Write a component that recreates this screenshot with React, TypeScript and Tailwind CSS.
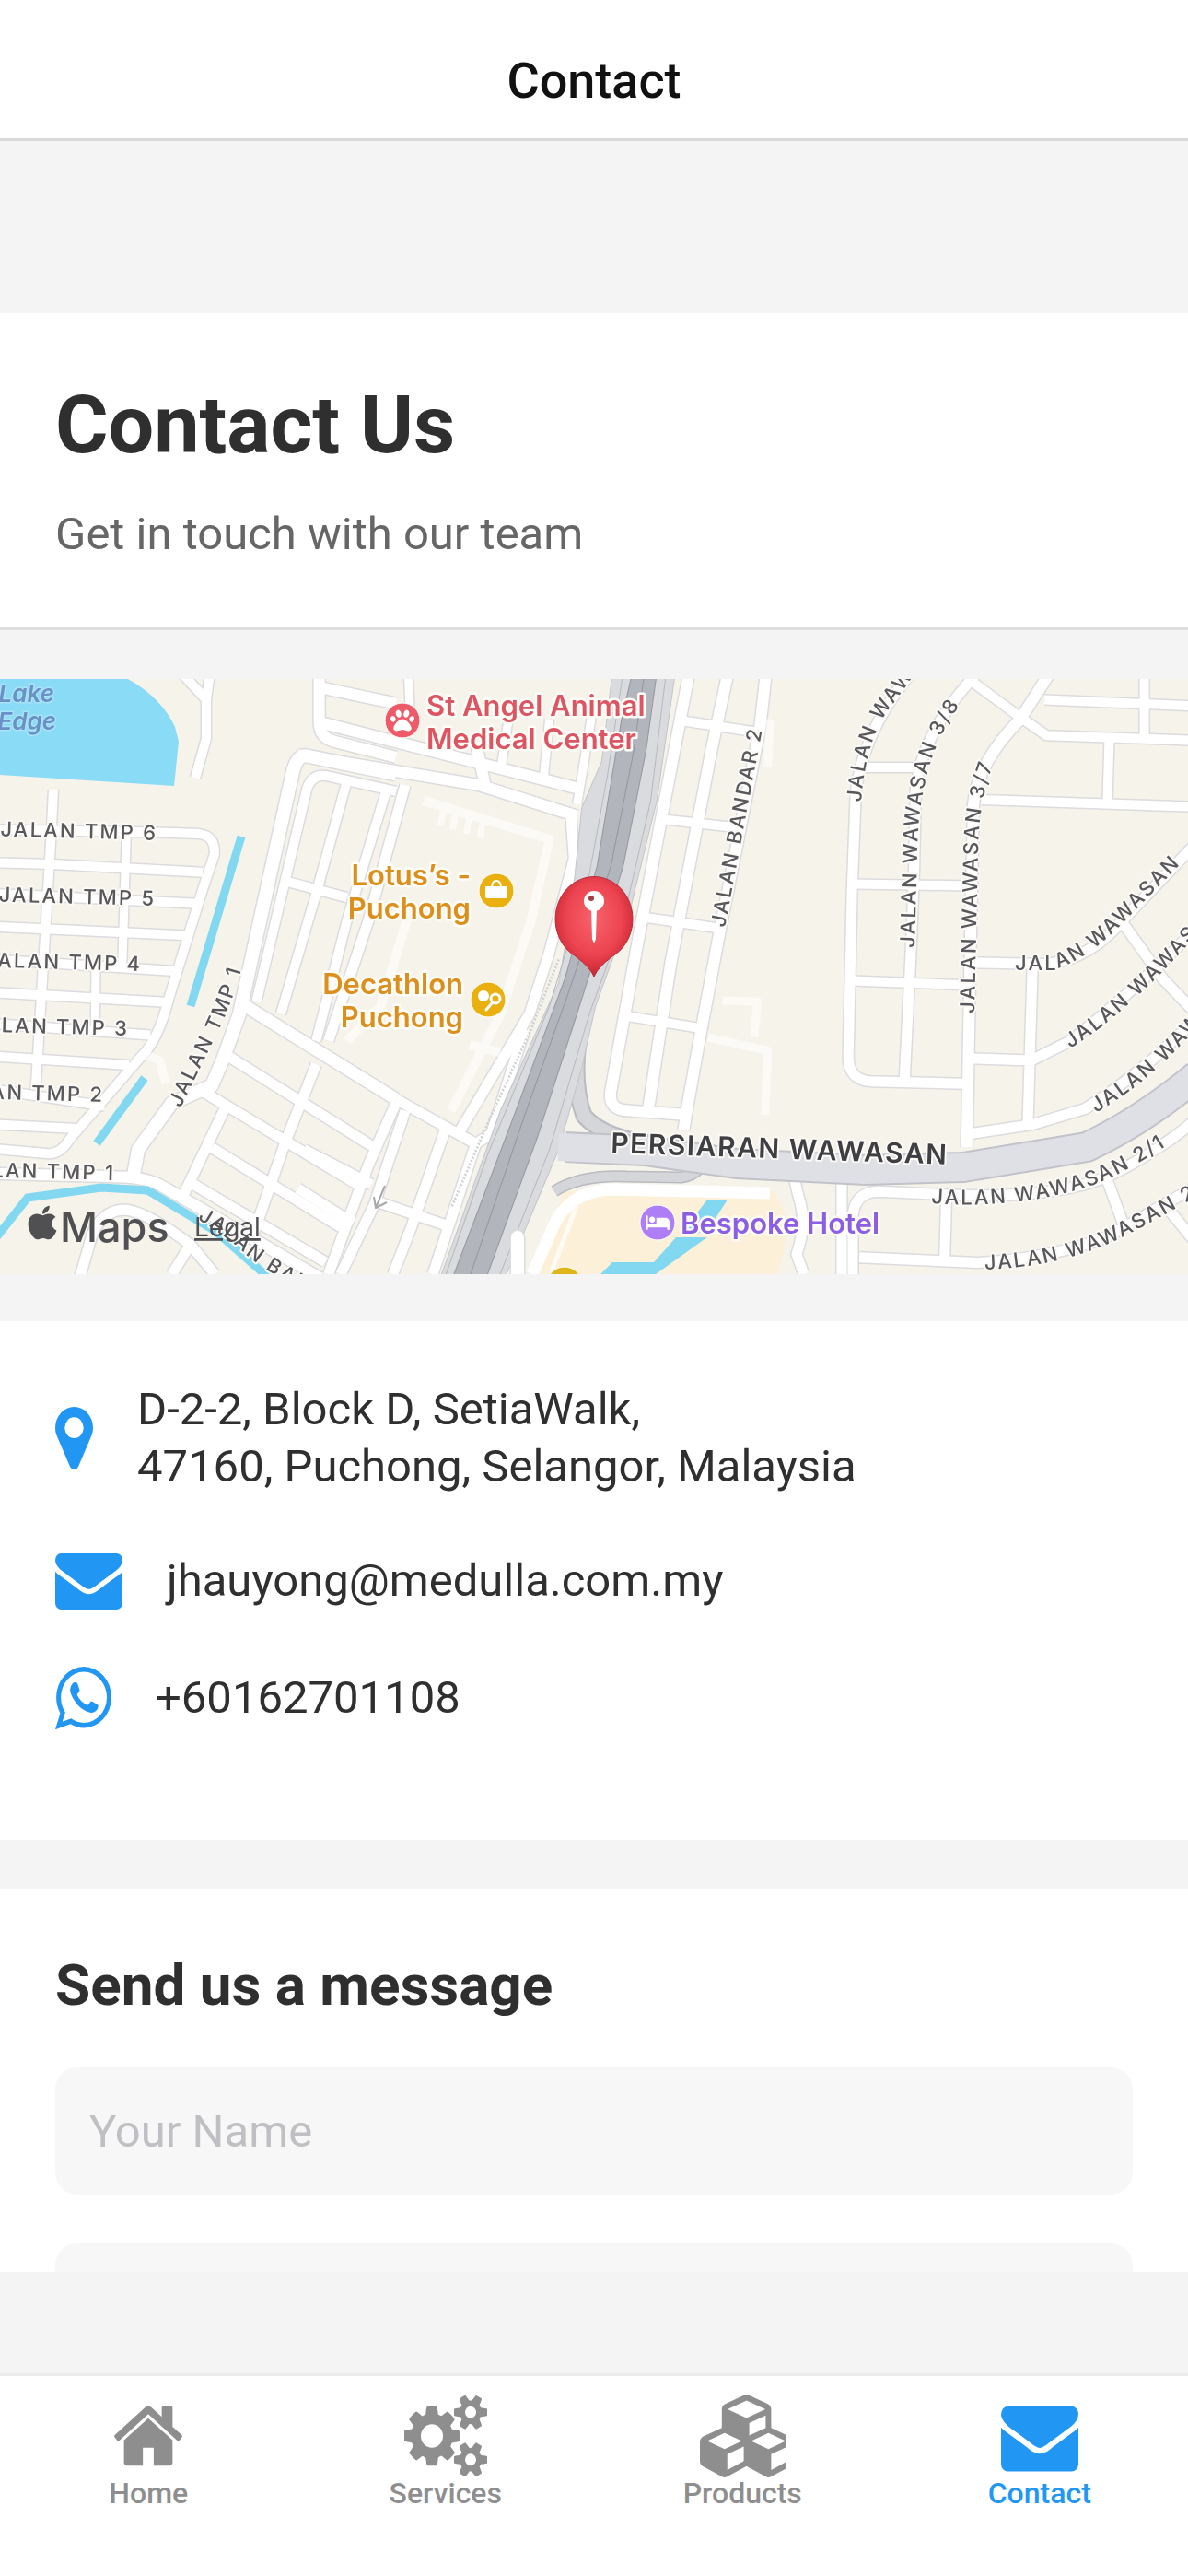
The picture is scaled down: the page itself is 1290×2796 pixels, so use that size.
import type { ReactNode } from "react";
import { FaApple, FaBed, FaPaw } from "react-icons/fa";

/* ---------- icons ---------- */

type IconProps = { className?: string };

function Glyph({ viewBox, d, className }: { viewBox: string; d: string; className?: string }) {
  return (
    <svg viewBox={viewBox} preserveAspectRatio="none" fill="currentColor" aria-hidden="true" className={className}>
      <path d={d} />
    </svg>
  );
}

const ENVELOPE =
  "M1792 710v794q0 66-47 113t-113 47h-1472q-66 0-113-47t-47-113v-794q44 49 101 87 362 246 497 345 57 42 92.5 65.5t94.5 48 110 24.5h2q51 0 110-24.5t94.5-48 92.5-65.5q170-123 498-345 57-39 100-87zm0-294q0 79-49 151t-122 123q-376 261-468 325-10 7-42.5 31t-54 38.5-52 32.5-57.5 27-50 9h-2q-23 0-50-9t-57.5-27-52-32.5-54-38.5-42.5-31q-91-64-262-182.5t-205-142.5q-62-42-117-115.5t-55-136.5q0-78 41.5-130t118.5-52h1472q65 0 112.5 47t47.5 113z";
const MARKER =
  "M1152 640q0-106-75-181t-181-75-181 75-75 181 75 181 181 75 181-75 75-181zm256 0q0 109-33 179l-364 774q-16 33-47.5 52t-67.5 19-67.5-19-46.5-52l-365-774q-33-70-33-179 0-212 150-362t362-150 362 150 150 362z";
const WHATSAPP =
  "M1113 974q13 0 97.5 44t89.5 53q2 5 2 15 0 33-17 76-16 39-71 65.5t-102 26.5q-57 0-190-62-98-45-170-118t-148-185q-72-107-71-194v-8q3-91 74-158 24-22 52-22 6 0 18 1.5t19 1.5q19 0 26.5 6.5t15.5 27.5q8 20 33 88t25 75q0 21-34.5 57.5t-34.5 46.5q0 7 5 15 34 73 102 137 56 53 151 101 12 7 22 7 15 0 54-48.5t52-48.5zm-203 530q127 0 243.5-50t200.5-134 134-200.5 50-243.5-50-243.5-134-200.5-200.5-134-243.5-50-243.5 50-200.5 134-134 200.5-50 243.5q0 203 120 368l-79 233 242-77q158 104 345 104zm0-1382q153 0 292.5 60t240.5 161 161 240.5 60 292.5-60 292.5-161 240.5-240.5 161-292.5 60q-195 0-365-94l-417 134 136-405q-108-178-108-389 0-153 60-292.5t161-240.5 240.5-161 292.5-60z";
const HOME =
  "M1472 992v480q0 26-19 45t-45 19h-384v-384h-256v384h-384q-26 0-45-19t-19-45v-480q0-1 .5-3t.5-3l575-474 575 474q1 2 1 6zm223-69l-62 74q-8 9-21 11h-3q-13 0-21-7l-692-577-692 577q-12 8-24 7-13-2-21-11l-62-74q-8-10-7-23.5t11-21.5l719-599q32-26 76-26t76 26l244 204v-195q0-14 9-23t23-9h192q14 0 23 9t9 23v408l219 182q10 8 11 21.5t-7 23.5z";
const COGS =
  "M896 896q0-106-75-181t-181-75-181 75-75 181 75 181 181 75 181-75 75-181zm768 512q0-52-38-90t-90-38-90 38-38 90q0 53 37.5 90.5t90.5 37.5 90.5-37.5 37.5-90.5zm0-1024q0-52-38-90t-90-38-90 38-38 90q0 53 37.5 90.5t90.5 37.5 90.5-37.5 37.5-90.5zm-384 421v185q0 10-7 19.5t-16 10.5l-155 24q-11 35-32 76 34 48 90 115 7 11 7 20 0 12-7 19-23 30-82.5 89.5t-78.5 59.5q-11 0-21-7l-115-90q-37 19-77 31-11 108-23 155-7 24-30 24h-186q-11 0-20-7.5t-10-17.5l-23-153q-34-10-75-31l-118 89q-7 7-20 7-11 0-21-8-144-133-144-160 0-9 7-19 10-14 41-53t47-61q-23-44-35-82l-152-24q-10-1-17-9.5t-7-19.5v-185q0-10 7-19.5t16-10.5l155-24q11-35 32-76-34-48-90-115-7-11-7-20 0-12 7-20 22-30 82-89t79-59q11 0 21 7l115 90q34-18 77-32 11-108 23-154 7-24 30-24h186q11 0 20 7.5t10 17.5l23 153q34 10 75 31l118-89q8-7 20-7 11 0 21 8 144 133 144 160 0 8-7 19-12 16-42 54t-45 60q23 48 34 82l152 23q10 2 17 10.5t7 19.5zm640 533v140q0 16-149 31-12 27-30 52 51 113 51 138 0 4-4 7-122 71-124 71-8 0-46-47t-52-68q-20 2-30 2t-30-2q-14 21-52 68t-46 47q-2 0-124-71-4-3-4-7 0-25 51-138-18-25-30-52-149-15-149-31v-140q0-16 149-31 13-29 30-52-51-113-51-138 0-4 4-7 4-2 35-20t59-34 30-16q8 0 46 46.5t52 67.5q20-2 30-2t30 2q51-71 92-112l6-2q4 0 124 70 4 3 4 7 0 25-51 138 17 23 30 52 149 15 149 31zm0-1024v140q0 16-149 31-12 27-30 52 51 113 51 138 0 4-4 7-122 71-124 71-8 0-46-47t-52-68q-20 2-30 2t-30-2q-14 21-52 68t-46 47q-2 0-124-71-4-3-4-7 0-25 51-138-18-25-30-52-149-15-149-31v-140q0-16 149-31 13-29 30-52-51-113-51-138 0-4 4-7 4-2 35-20t59-34 30-16q8 0 46 46.5t52 67.5q20-2 30-2t30 2q51-71 92-112l6-2q4 0 124 70 4 3 4 7 0 25-51 138 17 23 30 52 149 15 149 31z";
const CUBES =
  "M640 1632l384-192v-314l-384 164v342zm-64-454l404-173-404-173-404 173zm1088 454l384-192v-314l-384 164v342zm-64-454l404-173-404-173-404 173zm-448-293l384-165v-266l-384 164v267zm-64-379l441-189-441-189-441 189zm1088 518v416q0 36-19 67t-52 47l-448 224q-25 14-57 14t-57-14l-448-224q-4-2-7-4-2 2-7 4l-448 224q-25 14-57 14t-57-14l-448-224q-33-16-52-47t-19-67v-416q0-38 21.5-70t56.5-48l434-186v-400q0-38 21.5-70t56.5-48l448-192q23-10 50-10t50 10l448 192q35 16 56.5 48t21.5 70v400l434 186q36 16 57 48t21 70z";

const MarkerIcon = ({ className }: IconProps) => <Glyph viewBox="384 128 1024 1536" d={MARKER} className={className} />;
const EnvelopeIcon = ({ className }: IconProps) => <Glyph viewBox="0 256 1792 1408" d={ENVELOPE} className={className} />;
const WhatsappIcon = ({ className }: IconProps) => <Glyph viewBox="128 122 1536 1542" d={WHATSAPP} className={className} />;

/* ---------- map ---------- */

/* Each tile keeps its streets in its own local grid. */
const TILES = {
  west: "matrix(0.3333 0 0 0.4209 0 -7)",
  mid: "matrix(0.3333 0 0 0.4209 330 -7)",
  east: "matrix(0.4018 0 0 0.4209 660 -7)",
};

type Street = { tile: keyof typeof TILES; w: number; d: string };

const STREETS: Street[] = [
  { tile: "west", w: 10, d: "M590 0L672 70L672 170L636 272M684 0L672 70" },
  { tile: "west", w: 10, d: "M174 302L168 400L150 640L135 830L116 1075" },
  { tile: "west", w: 10, d: "M-20 405L520 412L650 416Q704 422 698 470L660 560L550 840Q515 950 460 990L225 1205Q195 1245 150 1240L-20 1228" },
  { tile: "west", w: 10, d: "M-20 490L170 494L660 515M-20 570L640 596M-20 655L610 678M-20 740L570 770M-20 825L540 850M-20 905L490 935M-20 990L420 1012M-20 1075L340 1118M-20 1165L250 1176" },
  { tile: "west", w: 9, d: "M412 412L405 590L398 760M312 760L310 920" },
  { tile: "west", w: 12, d: "M-20 1292L380 1300Q480 1300 540 1330L900 1495L1040 1560" },
  { tile: "west", w: 11, d: "M260 1560L300 1450Q330 1390 400 1385Q470 1385 620 1475L700 1552M560 1552L620 1475" },
  { tile: "west", w: 14, d: "M1290 262L1000 215Q965 210 950 270L830 700L780 880L730 990L690 1065L560 1110L450 1230L435 1296" },
  { tile: "west", w: 12, d: "M1040 0L1040 130Q1042 168 1090 178L1290 218M1040 38L1290 80" },
  { tile: "west", w: 10, d: "M835 850L1000 300Q1015 262 1060 266L1290 306M1132 275L1030 570L915 880M1260 300L1130 640L1030 950M930 538L1130 580" },
  { tile: "west", w: 13, d: "M800 860L1290 1100" },
  { tile: "west", w: 11, d: "M745 990L1220 1225M650 1075L1175 1325M690 1225L1110 1430M630 1320L1060 1520" },
  { tile: "west", w: 11, d: "M1030 1010L930 1210L820 1460M735 1120L590 1360M1290 1110L1200 1270L1070 1552" },
  { tile: "mid", w: 12, d: "M-20 212L570 290L890 370M560 180L590 290M50 128L900 300" },
  { tile: "mid", w: 9, d: "M340 0L345 90M670 100L640 260M800 120L780 280M940 100L890 340" },
  { tile: "mid", w: 11, d: "M870 370L880 480L800 720L735 880L510 1180" },
  { tile: "mid", w: 11, d: "M330 290L210 640L80 950M300 1100L560 1215L610 1190L720 920" },
  { tile: "mid", w: 11, d: "M560 1215L420 1552M330 1130L230 1370L120 1552M460 1180L350 1430L290 1552M230 1362L480 1430M0 1230L220 1320M-20 1330L160 1420" },
  { tile: "east", w: 12, d: "M220 0L140 400L80 700L8 1080Q0 1130 60 1130L210 1140M325 0L280 200L170 750L108 1135M428 0L410 150L300 680L245 960L215 1120L205 1180" },
  { tile: "east", w: 10, d: "M200 124L410 155M145 378L350 400M90 630L305 660M40 884L255 918" },
  { tile: "east", w: 11, d: "M820 0Q690 150 670 310L660 560L650 990Q650 1050 710 1054L960 1060" },
  { tile: "east", w: 11, d: "M1000 0Q850 150 832 300L828 500L820 700L802 1050" },
  { tile: "east", w: 12, d: "M1195 0L1115 120Q1000 230 988 340L980 700L970 1225" },
  { tile: "east", w: 10, d: "M980 20L1110 112L1185 162L1580 175M1180 70L1580 86M1450 0L1450 165M1355 170L1350 335M1010 328L1580 346M690 245L840 245M665 545L980 550M660 795L975 806" },
  { tile: "east", w: 11, d: "M980 748L1180 752Q1300 742 1390 640L1580 450M1148 750L1135 1160M975 995L1145 1000L1250 950Q1400 840 1580 670M975 1190L1150 1165L1290 1125Q1450 1030 1580 900M1395 650L1500 790L1580 870" },
  { tile: "east", w: 11, d: "M500 1290L515 1350Q540 1420 510 1500L530 1552M632 1300L632 1560M662 1560L662 1400Q668 1340 730 1338L900 1346Q1200 1360 1350 1300Q1480 1240 1580 1160M915 1346L910 1515M680 1508L1000 1522Q1200 1510 1350 1455L1580 1330M1350 1310L1400 1440M1520 1390L1580 1460" },
];

const PALE_LANES: Street[] = [
  { tile: "mid", w: 10, d: "M390 330L800 430L740 640L640 880L480 1130M350 600L250 860L140 950M540 960L640 980" },
  { tile: "mid", w: 7, d: "M455 350L445 395M495 358L485 405M540 365L530 415M585 372L575 425" },
  { tile: "east", w: 9, d: "M310 846L405 848L395 940M270 940L432 975L425 1140M438 120L432 245" },
  { tile: "west", w: 9, d: "M470 985L520 1000L540 1060" },
];

type RoadLabel = { id: string; d: string; text: string };

const ROAD_LABELS: RoadLabel[] = [
  { id: "tmp1", d: "M196 466L236 384Q262 330 272 270", text: "JALAN TMP 1" },
  { id: "bandar", d: "M214 586Q242 602 264 622Q292 648 400 700", text: "JALAN BANDAR 2" },
  { id: "bandar2", d: "M787 270Q806 170 836 10", text: "JALAN BANDAR 2" },
  { id: "w39", d: "M935 134Q940 60 972 24Q990 0 1080 -130", text: "JALAN WAWASAN 3/9" },
  { id: "w38", d: "M993 292L996 190Q997 110 1024 58Q1044 20 1080 -20", text: "JALAN WAWASAN 3/8" },
  { id: "w37", d: "M1058 363L1062 190Q1062 110 1100 46", text: "JALAN WAWASAN 3/7" },
  { id: "w1", d: "M1102 316L1142 316Q1180 306 1222 262L1400 80", text: "JALAN WAWASAN" },
  { id: "w2", d: "M1162 401Q1222 364 1290 288L1420 150", text: "JALAN WAWASAN 3/1" },
  { id: "w3", d: "M1190 471Q1250 436 1300 378L1420 240", text: "JALAN WAWASAN 3" },
  { id: "w21", d: "M1011 569Q1110 576 1190 548Q1240 528 1310 476", text: "JALAN WAWASAN 2/1" },
  { id: "w22", d: "M1069 641Q1150 638 1210 610Q1260 586 1370 520", text: "JALAN WAWASAN 2/2" },
];

const TMP_LABELS = [
  { x: 171, y: 175, n: 6 },
  { x: 169, y: 246, n: 5 },
  { x: 154, y: 317, n: 4 },
  { x: 140, y: 387, n: 3 },
  { x: 113, y: 459, n: 2 },
  { x: 125, y: 544, n: 1 },
];

function Streets({ items, color, extra, opacity }: { items: Street[]; color: string; extra: number; opacity?: number }) {
  return (
    <g fill="none" stroke={color} strokeLinejoin="round" opacity={opacity}>
      {items.map((s, i) => (
        <path key={i} d={s.d} transform={TILES[s.tile]} strokeWidth={s.w + extra} vectorEffect="non-scaling-stroke" />
      ))}
    </g>
  );
}

function Poi({ x, y, color, children }: { x: number; y: number; color: string; children?: ReactNode }) {
  return (
    <g transform={`translate(${x} ${y})`}>
      <circle r="19" fill={color} stroke="#fff" strokeWidth="1" />
      {children}
    </g>
  );
}

function MapView() {
  return (
    <svg
      viewBox="0 0 1290 646"
      preserveAspectRatio="xMidYMid slice"
      role="img"
      aria-label="Map of Puchong"
      className="block h-[646px] w-full overflow-hidden bg-[#f6f3ea] font-['Inter',sans-serif]"
    >
      <defs>
        <radialGradient id="pinFill" cx="50%" cy="42%" r="60%">
          <stop offset="0" stopColor="#f7636b" />
          <stop offset="0.6" stopColor="#ec4450" />
          <stop offset="1" stopColor="#c4222f" />
        </radialGradient>
        {ROAD_LABELS.map((l) => (
          <path key={l.id} id={l.id} d={l.d} />
        ))}
      </defs>

      <path d="M575 650L613 556L840 556Q866 590 842 650Z" fill="#fdf0d9" />
      <g fill="#82d8f0">
        <path d="M0 0H139Q175 20 190 52L194 68L189 116L0 104Z" fill="#8adbf6" />
        <path d="M652 646L665 633H710L734 606H768L712 646ZM768 565H790L774 590L756 604H738Z" />
      </g>

      <Streets items={STREETS} color="#dcdbde" extra={3} />
      <Streets items={STREETS} color="#ffffff" extra={0} />
      <Streets items={PALE_LANES} color="#ffffff" extra={0} opacity={0.6} />
      <g fill="none" stroke="#ffffff" strokeLinejoin="round">
        <path d="M578 646L600 596Q616 558 660 554L836 558" strokeWidth="13" />
        <path d="M598 646L626 572" strokeWidth="5" opacity="0.7" />
      </g>

      <g fill="none" stroke="#82d8f0" strokeWidth="9">
        <path d="M262 171L207 355M157 433L105 504" />
        <path d="M-4 606L30 563L110 552L160 555L235 600L292 650" />
      </g>

      {/* ramps leaving the expressway */}
      <g fill="none" strokeLinejoin="round">
        <path d="M634 360Q618 430 634 474Q656 500 720 506" stroke="#b9bbc0" strokeWidth="19" />
        <path d="M634 360Q618 430 634 474Q656 500 720 506" stroke="#d4d6da" strokeWidth="15" />
      </g>

      {/* expressway */}
      <g transform={TILES.mid}>
        <path
          d="M1005 0L1210 0L1150 330L1060 620L950 860L905 1020L830 1230L650 1570L440 1570L640 1130L830 800L870 620L905 350L970 230Z"
          fill="#d9dbde"
          stroke="#c3c5c9"
          strokeWidth="3"
        />
        <path d="M1070 0L1150 0L1115 200L1040 500L910 830L760 1200L590 1570L480 1570L700 1110L850 790L955 500L1035 120Z" fill="#b2b5bb" />
        <g fill="none" stroke="#94979e" strokeWidth="3">
          <path d="M1110 0L1075 200L1000 500L860 830L720 1140L535 1570" />
          <path d="M1070 0L1035 120L955 500L850 790L700 1110L480 1570" />
          <path d="M1150 0L1115 200L1040 500L910 830L760 1200L590 1570" />
        </g>
        <g fill="none" stroke="#b7b9be" strokeWidth="3">
          <path d="M1180 0L1130 330L1040 640L930 880L800 1230L630 1570" />
          <path d="M1040 0L990 260L930 520L800 860L600 1240L455 1570" />
          <path d="M830 740L740 920L600 1160L480 1380" stroke="#d0d1d4" strokeWidth="8" strokeDasharray="5 5" />
        </g>
      </g>

      {/* trunk road and its slip road */}
      <g fill="none" strokeLinejoin="round">
        <path d="M602 556Q630 538 680 540L740 541Q760 538 766 520" stroke="#b9bbc0" strokeWidth="13" />
        <path d="M602 556Q630 538 680 540L740 541Q760 538 766 520" stroke="#d4d6da" strokeWidth="10" />
        <path d="M614 508L700 512L800 526L940 533L1046 530L1180 508Q1240 480 1300 430" stroke="#c2c3ca" strokeWidth="34" />
        <path d="M606 508L700 512L800 526L940 533L1046 530L1180 508Q1240 480 1300 430" stroke="#dfe0e6" strokeWidth="30" />
        <path d="M562 660L562 606" stroke="#dcdbde" strokeWidth="17" strokeLinecap="round" />
        <path d="M562 660L562 606" stroke="#ffffff" strokeWidth="14" strokeLinecap="round" />
        <path d="M418 550L408 574M406 562L408 574L420 568" stroke="#a9a9ab" strokeWidth="2" />
      </g>

      {/* street names */}
      <g
        className="text-[22px] font-medium tracking-widest"
        fill="#58585c"
        stroke="#fbfaf6"
        strokeWidth="4"
        strokeLinejoin="round"
        paintOrder="stroke"
      >
        {TMP_LABELS.map((l) => (
          <text key={l.n} x={l.x} y={l.y} textAnchor="end" transform={`rotate(1.5 ${l.x} ${l.y})`}>
            JALAN TMP {l.n}
          </text>
        ))}
        {ROAD_LABELS.map((l) => (
          <text key={l.id}>
            <textPath href={`#${l.id}`}>{l.text}</textPath>
          </text>
        ))}
        <text x="663" y="514" transform="rotate(2 663 514)" className="text-[30px] font-semibold tracking-wider" fill="#3f3f43">
          PERSIARAN WAWASAN
        </text>
      </g>

      {/* places */}
      <g className="text-[31px] font-semibold" stroke="#fffdf8" strokeWidth="5" strokeLinejoin="round" paintOrder="stroke">
        <g fill="#dc5562">
          <text x="463" y="40">St Angel Animal</text>
          <text x="463" y="76">Medical Center</text>
        </g>
        <g fill="#dc8f1c" textAnchor="end">
          <text x="511" y="224">Lotus’s -</text>
          <text x="511" y="260">Puchong</text>
          <text x="503" y="342">Decathlon</text>
          <text x="503" y="378">Puchong</text>
        </g>
        <text x="739" y="602" fill="#8c5ee3">Bespoke Hotel</text>
        <g fill="#6a90c6" stroke="#a9e3f7" strokeWidth="3" textAnchor="end" className="text-[26px] italic">
          <text x="59" y="25">Lake</text>
          <text x="61" y="55">Edge</text>
        </g>
      </g>
      <Poi x={437} y={45} color="#ee5a68">
        <FaPaw x={-13} y={-13} size={26} color="#fff" />
      </Poi>
      <Poi x={539} y={230} color="#eab010">
        <path d="M-12 -5H12V6Q12 8 10 8H-10Q-12 8 -12 6Z" fill="#fff" />
        <path d="M-5 -3Q-5 -11 0 -11Q5 -11 5 -3" fill="none" stroke="#fff" strokeWidth="2" />
      </Poi>
      <Poi x={530} y={348} color="#eab010">
        <circle cx="-5" cy="-4" r="6" fill="#fff" />
        <g fill="none" stroke="#fff" strokeWidth="3">
          <ellipse cx="8" cy="-1" rx="5" ry="5" />
          <path d="M4 4L-2 11" strokeLinecap="round" />
        </g>
      </Poi>
      <Poi x={714} y={590} color="#ad7ef5">
        <FaBed x={-13} y={-13} size={26} color="#fff" />
      </Poi>
      <Poi x={613} y={657} color="#dfb51c" />

      {/* dropped pin */}
      <g>
        <path d="M645 323Q641 313 625 301A42 46 0 1 1 665 301Q649 313 645 323Z" fill="url(#pinFill)" stroke="#b92a35" strokeWidth="1" />
        <path d="M642 248H648L647 282L645 287L643 282Z" fill="#fff" />
        <circle cx="645" cy="241" r="11" fill="#fff" />
        <circle cx="642" cy="238" r="3" fill="#a83a44" />
      </g>

      {/* attribution */}
      <g fill="#505053">
        <FaApple x={25} y={569} size={42} color="#505053" />
        <text x="65" y="611" className="text-[45px] font-medium">Maps</text>
        <text x="211" y="605" className="text-[28px] underline">Legal</text>
      </g>
    </svg>
  );
}

/* ---------- page ---------- */

function ContactRow({ icon, children }: { icon: ReactNode; children: ReactNode }) {
  return (
    <li className="flex min-h-[68px] items-center gap-[48px]">
      {icon}
      {children}
    </li>
  );
}

const TABS = [
  { label: "Home", active: false, icon: <Glyph viewBox="0 0 1792 1792" d={HOME} className="h-[90px] w-[82px]" /> },
  { label: "Services", active: false, icon: <Glyph viewBox="0 0 1920 1792" d={COGS} className="h-[90px] w-[90px]" /> },
  { label: "Products", active: false, icon: <Glyph viewBox="0 0 2000 1792" d={CUBES} className="h-[90px] w-[93px]" /> },
  { label: "Contact", active: true, icon: <Glyph viewBox="0 0 1792 1792" d={ENVELOPE} className="h-[90px] w-[84px]" /> },
];

export default function App() {
  return (
    <div className="flex h-screen flex-col bg-[#f4f4f4] font-['Roboto',sans-serif] text-[#2f2f2f]">
      <header className="flex-none border-b-[3px] border-[#d9d9d9] bg-white pt-[57px] pb-[31px]">
        <p className="text-center text-[54px] leading-[62px] font-medium text-[#111111]">Contact</p>
      </header>

      <main className="mb-[110px] min-h-0 flex-1 overflow-hidden pt-[187px]">
        <section className="border-b-[3px] border-[#dedede] bg-white px-[60px] pt-[71px] pb-[70px]">
          <h1 className="text-[88px] leading-[100px] font-bold">Contact Us</h1>
          <p className="mt-[38px] text-[49px] leading-[62px] text-[#666666]">Get in touch with our team</p>
        </section>

        <section className="mt-[53px]">
          <MapView />
        </section>

        <section className="mt-[51px] bg-white px-[60px] pt-[65px] pb-[120px]">
          <ul className="flex flex-col gap-[59px] text-[49px] leading-[62px]">
            <ContactRow icon={<MarkerIcon className="h-[68px] w-[41px] flex-none text-[#2196f3]" />}>
              <address className="not-italic">
                D-2-2, Block D, SetiaWalk,
                <br />
                47160, Puchong, Selangor, Malaysia
              </address>
            </ContactRow>
            <ContactRow icon={<EnvelopeIcon className="h-[61px] w-[73px] flex-none text-[#2196f3]" />}>
              <a href="mailto:jhauyong@medulla.com.my">jhauyong@medulla.com.my</a>
            </ContactRow>
            <ContactRow icon={<WhatsappIcon className="h-[68px] w-[61px] flex-none text-[#2196f3]" />}>
              <a href="https://wa.me/60162701108">+60162701108</a>
            </ContactRow>
          </ul>
        </section>

        <section className="mt-[53px] bg-white px-[60px] pt-[65px] pb-[64px]">
          <h2 className="text-[62px] leading-[80px] font-bold">Send us a message</h2>
          <form className="mt-[49px] flex flex-col gap-[53px]">
            <input
              type="text"
              aria-label="Your Name"
              placeholder="Your Name"
              className="h-[138px] w-full rounded-[24px] bg-[#f7f7f7] px-[37px] text-[49px] outline-none placeholder:text-[#c0c0c4]"
            />
            <input
              type="email"
              aria-label="Your Email"
              className="h-[138px] w-full rounded-[24px] bg-[#f7f7f7] px-[37px] text-[49px] outline-none"
            />
          </form>
        </section>
      </main>

      <nav className="grid flex-none grid-cols-4 border-t-[3px] border-[#ebebeb] bg-white pt-[20px] pb-[73px]">
        {TABS.map((tab) => (
          <button
            key={tab.label}
            type="button"
            aria-current={tab.active ? "page" : undefined}
            className={tab.active ? "flex flex-col items-center text-[#2196f3]" : "flex flex-col items-center text-[#8e8e8f]"}
          >
            {tab.icon}
            <span className="text-[32px] leading-[34px] font-medium">{tab.label}</span>
          </button>
        ))}
      </nav>
    </div>
  );
}
